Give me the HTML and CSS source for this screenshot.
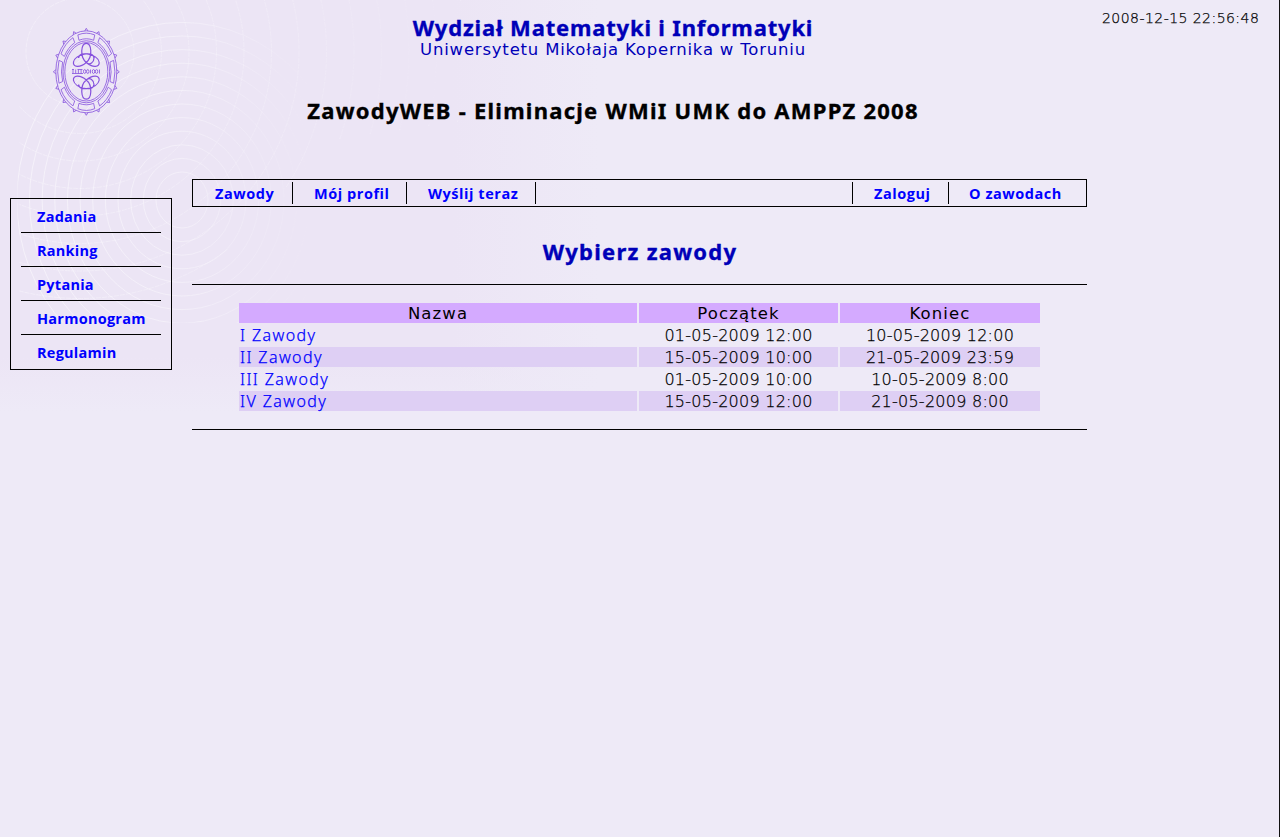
FILE: index.html
```html
<!DOCTYPE html>
<html lang="pl">
<head>
<meta charset="utf-8">
<title>ZawodyWEB</title>
<link rel="stylesheet" href="styles.css">
</head>
<body>
<svg class="rings" viewBox="0 0 600 420" aria-hidden="true">
  <defs>
    <linearGradient id="fadeX"><stop offset="0" stop-color="#fff"/><stop offset=".27" stop-color="#fff" stop-opacity=".8"/><stop offset=".5" stop-color="#fff" stop-opacity="0"/></linearGradient>
    <linearGradient id="fadeFar"><stop offset="0" stop-color="#fff"/><stop offset=".45" stop-color="#fff" stop-opacity=".6"/><stop offset=".75" stop-color="#fff" stop-opacity="0"/></linearGradient>
    <mask id="m1"><rect x="18" width="582" height="322" fill="url(#fadeX)"/></mask>
    <mask id="m2"><path d="M20 0H600V100L330 140 170 310H20z" fill="url(#fadeFar)"/></mask>
  </defs>
  <g id="near" mask="url(#m1)"></g>
  <g id="far" mask="url(#m2)"></g>
</svg>
<div class="page">
  <aside class="left">
    <svg class="logo" viewBox="0 0 68 88" role="img" aria-label="Logo">
      <g id="points"></g>
      <ellipse cx="33.300" cy="43.800" rx="30.500" ry="41"/>
      <ellipse cx="33.300" cy="43.800" rx="23.300" ry="31"/>
      <ellipse cx="33.300" cy="43.800" rx="21.500" ry="29.200"/>
      <g id="panels"></g>
      <g class="knot">
        <path id="knot" d="M33.300 34.500C26.500 29 28 15.300 33.300 15.300S40 29 33.300 34.500C27 40 19.500 39.500 20.500 34 22 26.500 40.500 22 41 30 41 34 37 38 33.300 34.500M33.300 34.500C39.600 40 47.100 39.500 46.100 34 44.600 26.500 26.100 22 25.600 30"/>
        <use href="#knot" transform="matrix(1 0 0 -1 0 86.500)"/>
      </g>
      <path d="M20 41.500v4M22.700 41.500v4M25.400 41.500v4M28.100 41.500v4M37.500 41.500v4M46.500 41.500v4M19 41.500h2M19 45.500h11M24.500 41.500h5"/>
      <ellipse cx="31.700" cy="43.500" rx="1.200" ry="2"/><ellipse cx="34.800" cy="43.500" rx="1.200" ry="2"/><ellipse cx="40.500" cy="43.500" rx="1.200" ry="2"/><ellipse cx="43.600" cy="43.500" rx="1.200" ry="2"/>
    </svg>
    <nav class="side">
      <a href="#">Zadania</a>
      <a href="#">Ranking</a>
      <a href="#">Pytania</a>
      <a href="#">Harmonogram</a>
      <a href="#">Regulamin</a>
    </nav>
  </aside>
  <main class="main">
    <header class="head">
      <div class="faculty">Wydział Matematyki i Informatyki</div>
      <div class="uni">Uniwersytetu Mikołaja Kopernika w Toruniu</div>
      <h1 class="title">ZawodyWEB - Eliminacje WMiI UMK do AMPPZ 2008</h1>
    </header>
    <nav class="top">
      <a class="n1" href="#">Zawody</a><a class="n2" href="#">Mój profil</a><a class="n3" href="#">Wyślij teraz</a>
      <a class="n4" href="#">Zaloguj</a><a class="n5" href="#">O zawodach</a>
    </nav>
    <h2 class="pick">Wybierz zawody</h2>
    <section class="list">
      <table>
        <thead><tr><th class="c1">Nazwa</th><th class="c2">Początek</th><th class="c3">Koniec</th></tr></thead>
        <tbody>
        <tr><td><a href="#">I Zawody</a></td><td>01-05-2009 12:00</td><td>10-05-2009 12:00</td></tr>
        <tr><td><a href="#">II Zawody</a></td><td>15-05-2009 10:00</td><td>21-05-2009 23:59</td></tr>
        <tr><td><a href="#">III Zawody</a></td><td>01-05-2009 10:00</td><td>10-05-2009 8:00</td></tr>
        <tr><td><a href="#">IV Zawody</a></td><td>15-05-2009 12:00</td><td>21-05-2009 8:00</td></tr>
        </tbody>
      </table>
    </section>
  </main>
  <div class="clock">2008-12-15 22:56:48</div>
</div>
<script src="rings.js"></script>
</body>
</html>
```
FILE: styles.css
```css
* { box-sizing: border-box; }
body {
  margin: 0;
  height: 837px;
  overflow: hidden;
  font-family: "DejaVu Sans", sans-serif;
  font-size: 16px;
  color: #000;
  background: #eeeaf7;
}
a { color: #00f; text-decoration: none; }
.rings {
  position: absolute;
  left: 0;
  top: 0;
  width: 600px;
  height: 420px;
  fill: none;
  stroke: #fff;
  stroke-width: 1;
  background:
    linear-gradient(to right, #eeeaf700 75%, #eeeaf7 100%),
    linear-gradient(#ece5f5 85%, #eeeaf7 98%);
}
#near { opacity: .48; }
#far { opacity: .32; stroke-dasharray: 5 1; }
.page {
  position: relative;
  display: grid;
  grid-template-columns: 192px 895px 192px;
  height: 837px;
  border-right: 1px solid #111;
}
.left { padding: 28px 0 0 10px; }
.logo {
  display: block;
  width: 68px;
  height: 88px;
  margin: 0 0 82px 43px;
  fill: none;
  stroke: #8550dd;
  stroke-width: .8;
}
.knot { stroke-width: 1.2; }
.side {
  width: 162px;
  height: 172px;
  border: 1px solid #000;
  padding: 0 10px;
}
.side a {
  display: block;
  height: 34px;
  padding-left: 16px;
  line-height: 36px;
  border-bottom: 1px solid #000;
}
.side a:last-child { border-bottom: 0; }
.side, .top { font: bold 14.5px "Open Sans", sans-serif; letter-spacing: .25px; }
.top { letter-spacing: .55px; }
.head { height: 179px; padding: 15px 53px 0 0; text-align: center; color: #0000b8; white-space: nowrap; }
.faculty, .title, .pick { font: bold 22px/24px "Noto Sans", sans-serif; -webkit-text-stroke: .35px; }
.faculty { letter-spacing: .82px; }
.uni { font-size: 16.5px; line-height: 21px; letter-spacing: .8px; }
.title { margin: 38px 0 0; color: #000; letter-spacing: 1.25px; }
.top { display: flex; height: 28px; border: 1px solid #000; padding: 2px 0; }
.top a { height: 22px; line-height: 23px; border-right: 1px solid #000; padding-left: 21px; white-space: nowrap; }
.top .n1 { width: 100px; padding-left: 22px; }
.top .n2 { width: 114px; }
.top .n3 { width: 129px; }
.top .n4 { width: 97px; margin-left: auto; border-left: 1px solid #000; }
.top .n5 { width: 137px; border: 0; padding-left: 20px; }
.pick { margin: 32px 0 21px; padding-left: 1px; text-align: center; color: #0000b8; letter-spacing: 1.25px; }
.list { height: 146px; border-top: 1px solid #000; border-bottom: 1px solid #000; padding: 16px 0 0 45px; }
table { width: 805px; border-spacing: 2px; table-layout: fixed; }
th, td { height: 20px; padding: 1px 1px 0; line-height: 19px; text-align: center; }
th { font-size: 16.5px; font-weight: 400; background: #d4aaff; letter-spacing: 1.1px; }
td { font-weight: 200; letter-spacing: .25px; -webkit-text-stroke: .25px; }
td:first-child { text-align: left; font-family: "Noto Sans", sans-serif; font-weight: 300; letter-spacing: 1.4px; }
tbody tr:nth-child(even) td { background: #decff4; }
.c1 { width: 398px; }
.c2 { width: 199px; }
.c3 { width: 200px; }
.clock { padding: 9px 0 0 15px; font-size: 14px; font-weight: 200; letter-spacing: .45px; -webkit-text-stroke: .25px; line-height: 18px; white-space: nowrap; }
```
FILE: rings.js
```js
const NS = 'http://www.w3.org/2000/svg';
function add(parent, name, attrs) {
  const el = document.createElementNS(NS, name);
  for (const k in attrs) el.setAttribute(k, attrs[k]);
  document.getElementById(parent).appendChild(el);
}
for (let i = 0; i < 12; i++) {
  const r = 28 + i * 13.6;
  add('near', 'ellipse', { cx: 182, cy: 200, rx: r * 0.93, ry: r });
}
for (let i = 0; i < 13; i++) add('far', 'circle', { cx: 80, cy: 52, r: 54 + i * 27.5 });

// Logo rim: eight framed panels and sixteen small points
const pt = (a, rx, ry) => (33.3 + rx * Math.cos(a)).toFixed(2) + ' ' + (43.8 + ry * Math.sin(a)).toFixed(2);
for (let i = 0; i < 8; i++) {
  const a = i * Math.PI / 4, b = a - 0.3, c = a + 0.3;
  add('panels', 'path', { d: `M${pt(b, 24.8, 33)}A24.8 33 0 0 1 ${pt(c, 24.8, 33)}L${pt(c, 28.6, 38.6)}A28.6 38.6 0 0 0 ${pt(b, 28.6, 38.6)}Z` });
}
for (let i = 0; i < 16; i++) {
  const a = i * Math.PI / 8;
  add('points', 'path', { d: `M${pt(a - 0.05, 30.5, 41)}L${pt(a, 33, 43.5)}L${pt(a + 0.05, 30.5, 41)}` });
}
```
